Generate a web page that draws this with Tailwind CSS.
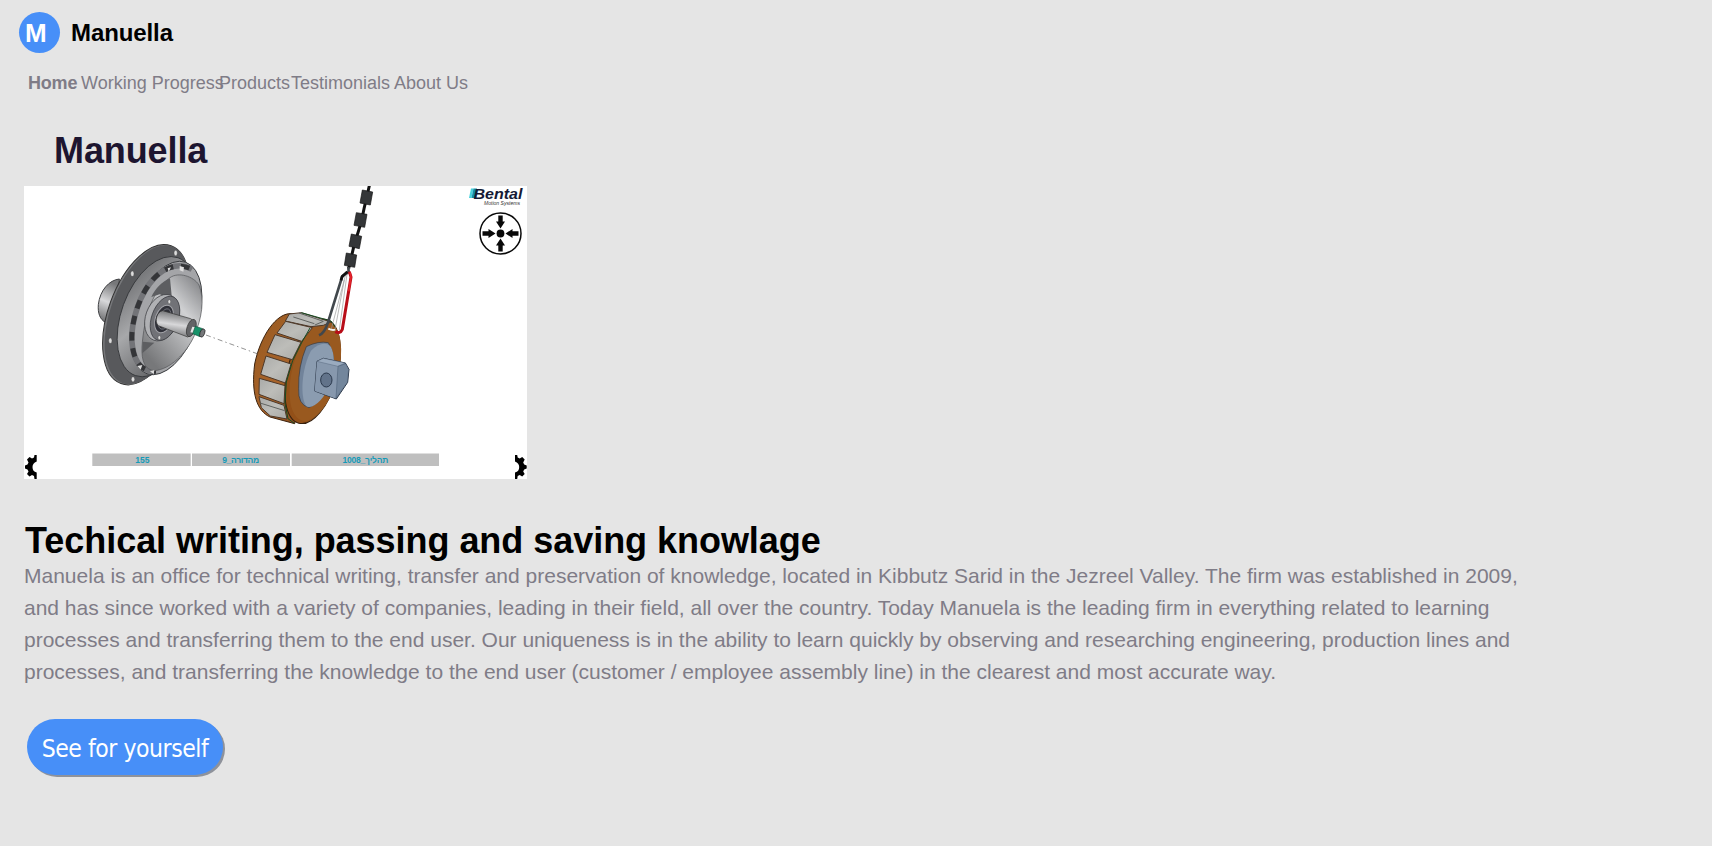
<!DOCTYPE html>
<html lang="en">
<head>
<meta charset="utf-8">
<title>Manuella</title>
<script src="https://cdn.jsdelivr.net/npm/@tailwindcss/browser@4"></script>
</head>
<body class="h-screen overflow-hidden bg-[#e5e5e5] font-['Liberation_Sans',Arial,sans-serif] text-black">
<header class="flex h-[53px] items-end pl-[19px]">
  <div class="flex size-[41px] items-center rounded-full bg-[#478ff8] pl-1.5 text-[26px] font-bold leading-none text-white">M</div>
  <span class="ml-[11px] h-[41px] text-2xl leading-[41px] font-bold tracking-[-0.1px]">Manuella</span>
</header>
<nav class="mt-[18px] flex h-6 pl-7 text-lg leading-6 whitespace-nowrap text-[#7f7c87]">
  <a class="w-[53px] font-bold tracking-[-0.2px]">Home</a>
  <a class="w-[138px]">Working Progress</a>
  <a class="w-[72px]">Products</a>
  <a class="w-[103px]">Testimonials</a>
  <a>About Us</a>
</nav>
<main class="pl-6">
  <h1 class="mt-9 ml-[30px] h-[55px] text-4xl leading-10 font-bold tracking-[-0.1px] text-[#1d1530]">Manuella</h1>
  <svg class="block h-[293px] w-[503px] bg-white" viewBox="24 186 503 293">
    <defs>
      <linearGradient id="steel" x1="0" y1="0" x2="1" y2="1"><stop offset="0" stop-color="#5f6063"/><stop offset=".45" stop-color="#a7a8aa"/><stop offset="1" stop-color="#4c4d50"/></linearGradient>
      <linearGradient id="bowl" x1="1" y1="0" x2=".3" y2="1"><stop offset="0" stop-color="#77787b"/><stop offset=".4" stop-color="#d0d1d3"/><stop offset="1" stop-color="#77787a"/></linearGradient>
      <linearGradient id="shaft" x1=".2" y1="0" x2="0" y2="1"><stop offset="0" stop-color="#77787a"/><stop offset=".45" stop-color="#d8d8da"/><stop offset="1" stop-color="#5a5b5d"/></linearGradient>
      <linearGradient id="copper" x1="0" y1="0" x2="1" y2="1"><stop offset="0" stop-color="#95581f"/><stop offset=".5" stop-color="#a9642a"/><stop offset="1" stop-color="#7c4015"/></linearGradient>
      <linearGradient id="plate" x1="0" y1="0" x2="1" y2="1"><stop offset="0" stop-color="#a9aaa8"/><stop offset=".5" stop-color="#bdbdb9"/><stop offset="1" stop-color="#a9a9a5"/></linearGradient>
    </defs>
    <!-- rotor housing -->
    <g transform="translate(80 230) scale(.33333)">
      <path d="M118 147C88 150 60 180 55 224C53 250 60 268 76 277L110 280Z" fill="url(#shaft)" stroke="#3d3e41" stroke-width="3"/>
      <ellipse cx="198" cy="254" rx="113" ry="220" transform="rotate(20 198 254)" fill="#77787b" stroke="#333" stroke-width="3"/>
      <ellipse cx="202" cy="254" rx="111" ry="218" transform="rotate(20 202 254)" fill="#58595c"/>
      <ellipse cx="230" cy="260" rx="106" ry="188" transform="rotate(20 230 260)" fill="url(#steel)" stroke="#333538" stroke-width="2.5"/>
      <ellipse cx="259" cy="264" rx="95" ry="177" transform="rotate(19 259 264)" fill="#a4a5a8" stroke="#303235" stroke-width="2.5"/>
      <path d="M336 118C292 92 242 116 208 162C168 216 148 302 158 354C166 402 188 424 228 424" fill="none" stroke="#737478" stroke-width="17"/>
      <path d="M328 114C285 98 242 116 208 162C168 216 148 302 158 354C166 402 188 424 228 424" fill="none" stroke="#343538" stroke-width="15" stroke-dasharray="26 23"/>
      <path d="M270 143C295 125 340 138 357 165C375 210 365 265 343 317C318 372 270 417 225 422C195 421 184 394 186 351C192 260 218 180 270 143Z" fill="url(#bowl)" stroke="#525356" stroke-width="2"/>
      <path d="M270 145C245 156 226 176 214 201L239 193L276 207ZM188 335L187 370L223 338Z" fill="#5d5e61"/>
      <ellipse cx="246" cy="263" rx="49" ry="72" transform="rotate(20 246 263)" fill="#b0b1b4" stroke="#3b3c40" stroke-width="2"/>
      <ellipse cx="255" cy="265" rx="40" ry="69" transform="rotate(20 255 265)" fill="#717277" stroke="#34353a" stroke-width="2"/>
      <ellipse cx="252" cy="267" rx="26" ry="43" transform="rotate(20 252 267)" fill="#303139" stroke="#a2a3a8" stroke-width="3"/>
      <ellipse cx="254" cy="267" rx="17" ry="32" transform="rotate(20 254 267)" fill="none" stroke="#85868e" stroke-width="2"/>
      <path d="M248 242L332 266C349 272 341 317 323 321L235 287C222 275 231 244 248 242Z" fill="url(#shaft)" stroke="#333" stroke-width="2"/>
      <ellipse cx="334" cy="294" rx="13" ry="27" transform="rotate(18 334 294)" fill="#626366" stroke="#333" stroke-width="2"/>
      <path d="M337 290L347 292L342 309L331 307Z" fill="#e5e5e5"/>
      <path d="M346 289L368 296L360 320L338 311Z" fill="#169269" stroke="#13543f" stroke-width="2"/>
      <ellipse cx="367" cy="309" rx="7" ry="13" transform="rotate(20 367 309)" fill="#75777a" stroke="#222" stroke-width="2"/>
      <g fill="#ddd" stroke="#444"><ellipse cx="287" cy="69" rx="5" ry="8"/><ellipse cx="157" cy="131" rx="5" ry="8"/><ellipse cx="91" cy="332" rx="5" ry="8"/><ellipse cx="159" cy="448" rx="5" ry="8"/><ellipse cx="268" cy="215" rx="4" ry="6"/><ellipse cx="238" cy="323" rx="4" ry="6"/></g>
      <path d="M299 108L312 112L310 125L299 121ZM263 115L273 112L266 125ZM172 408L187 405L182 419ZM210 424L223 420L221 433Z" fill="#ddd"/>
    </g>
    <path d="M206 335L258 354" stroke="#777" stroke-width=".8" stroke-dasharray="5 3 1.5 3"/>
    <!-- stator with cable -->
    <g transform="translate(240 180) scale(.33333)">
      <path d="M155 401C110 397 61 468 44 552C33 640 50 692 90 711L164 731L240 430Z" fill="url(#copper)" stroke="#3c2410" stroke-width="3"/>
      <ellipse cx="218" cy="574" rx="75" ry="161" transform="rotate(15 218 574)" fill="#935018" stroke="#35200e" stroke-width="3"/>
      <ellipse cx="226" cy="574" rx="69" ry="153" transform="rotate(15 226 574)" fill="#99591f"/>
      <g fill="url(#plate)" stroke="#4c3829" stroke-width="3">
        <path d="M148 402L184 398L273 426L250 436L213 440L136 423Z"/>
        <path d="M137 424L217 443L185 484L111 459Z"/>
        <path d="M105 464L183 487L157 539L81 517Z"/>
        <path d="M78 528L153 552L136 609L62 583Z"/>
        <path d="M58 595L135 617L132 671L57 643Z"/>
        <path d="M57 650L132 676L141 717L91 708L64 683Z"/>
      </g>
      <path d="M177 399L250 424L225 435M160 411L223 431M60 669L134 692" fill="none" stroke="#60625f" stroke-width="3"/>
      <path d="M210 444L186 486L158 542L139 606L135 670L144 716L163 730M184 398L273 423L286 442" fill="none" stroke="#174b22" stroke-width="3"/>
      <path d="M199 500Q235 482 265 488Q290 530 276 588Q250 665 207 683Q173 674 176 625Q174 560 199 500Z" fill="#71839a" stroke="#303947" stroke-width="2"/>
      <path d="M213 512C234 490 260 484 273 501C291 538 279 601 250 650C235 671 213 686 199 679C179 650 185 565 213 512Z" fill="#8b9cb0"/>
      <path d="M231 544L250 535L316 549L327 568L323 607L289 657L224 633Z" fill="#8196af" stroke="#2b3747" stroke-width="3"/>
      <path d="M231 544L294 559L286 655L224 633Z" fill="#8798ad"/>
      <path d="M231 544L250 535L316 549L294 559Z" fill="#9aabbf" stroke="#445368"/>
      <path d="M294 559L317 551L326 568L322 607L288 655Z" fill="#73869c" stroke="#344458"/>
      <ellipse cx="259" cy="600" rx="17" ry="21" fill="#62738a" stroke="#2a384b" stroke-width="3"/>
      <path d="M388 17Q382 45 373 82Q362 140 345 184L326 265" fill="none" stroke="#121212" stroke-width="9"/>
      <g fill="#343638" stroke="#111" stroke-width="2"><path d="M367 30L398 36L391 75L360 69Z"/><path d="M349 98L381 103L374 142L342 136Z"/><path d="M334 162L365 169L358 206L327 199Z"/><path d="M319 219L350 225L344 262L313 256Z"/></g>
      <path d="M325 261L326 276L307 288L264 427Q254 459 237 466" fill="none" stroke="#41474c" stroke-width="8"/>
      <path d="M322 275L306 290L303 301" fill="none" stroke="#111" stroke-width="8"/>
      <path d="M316 287L274 447M321 283L298 450M313 300L285 449" fill="none" stroke="#999" stroke-width="2"/>
      <path d="M265 446Q276 452 286 449" fill="none" stroke="#eee" stroke-width="6"/>
      <path d="M328 275L333 291L307 448Q300 463 286 455" fill="none" stroke="#b80d18" stroke-width="9"/>
      <path d="M330 277L333 291L326 334" fill="none" stroke="#e6232b" stroke-width="5"/>
    </g>
    <!-- company mark -->
    <path d="M471 188.5H473.5L471.5 198H469Z" fill="#46d2dc"/><path d="M473.5 188.5H477L475 198H471.5Z" fill="#168ca9"/>
    <text x="473.5" y="198.5" textLength="49" lengthAdjust="spacingAndGlyphs" font-size="14.5" font-weight="700" font-style="italic" fill="#151a35">Bental</text>
    <text x="484" y="204.5" textLength="36" lengthAdjust="spacingAndGlyphs" font-size="5.4" font-style="italic" fill="#333">Motion Systems</text>
    <g fill="#090909"><circle cx="500.5" cy="233.5" r="20.5" fill="#fff" stroke="#090909" stroke-width="1.5"/><circle cx="500.5" cy="233.5" r="3.9"/>
      <path id="arrow" d="M498.3 215.5H502.7V221.5H505L500.5 228.5L496 221.5H498.3Z"/>
      <use href="#arrow" transform="rotate(90 500.5 233.5)"/><use href="#arrow" transform="rotate(180 500.5 233.5)"/><use href="#arrow" transform="rotate(270 500.5 233.5)"/></g>
    <!-- caption bars -->
    <path d="M92.3 453.5H190.7V466H92.3ZM192 453.5H290V466H192ZM291.7 453.5H439V466H291.7Z" fill="#bfbfbf"/>
    <g fill="#159ab8" font-size="8.5" font-weight="700" text-anchor="middle">
      <text x="142.3" y="463">155</text>
      <text x="240.7" y="463" direction="rtl" textLength="37">מהדורה_9</text>
      <text x="365.4" y="463" direction="rtl" textLength="46">תהליך_1008</text>
    </g>
    <path id="gear" d="M36.7 455L36.7 461.5Q32.5 463 32.5 467Q32.5 471.5 36.7 472.5L36.7 479L34.5 479L34 476L32 475L29.5 476.5L27 474L28.5 471.5L27.5 469.5L25 468.5V465.5L27.5 464.5L28.5 462.5L27 459.5L29.5 457L32 458.5L34 457.5L34.5 455Z" fill="#000"/>
    <use href="#gear" transform="translate(551.7 0) scale(-1 1)"/>
  </svg>
  <h2 class="mt-[42px] h-[39px] pl-px text-4xl leading-10 font-bold tracking-[-0.04px] whitespace-nowrap">Techical writing, passing and saving knowlage</h2>
  <p class="text-[21px] leading-8 whitespace-nowrap text-[#7f7c87]">Manuela is an office for technical writing, transfer and preservation of knowledge, located in Kibbutz Sarid in the Jezreel Valley. The firm was established in 2009,<br>and has since worked with a variety of companies, leading in their field, all over the country. Today Manuela is the leading firm in everything related to learning<br>processes and transferring them to the end user. Our uniqueness is in the ability to learn quickly by observing and researching engineering, production lines and<br>processes, and transferring the knowledge to the end user (customer / employee assembly line) in the clearest and most accurate way.</p>
  <button class="mt-[31px] ml-[3px] flex h-14 w-[196px] items-center justify-center rounded-[28px] bg-[#478ff8] pt-1 font-['DejaVu_Sans_Condensed','DejaVu_Sans',sans-serif] text-[24.5px] tracking-[-0.45px] whitespace-nowrap text-white shadow-[2px_2px_0_#8e929b]">See for yourself</button>
</main>
</body>
</html>
